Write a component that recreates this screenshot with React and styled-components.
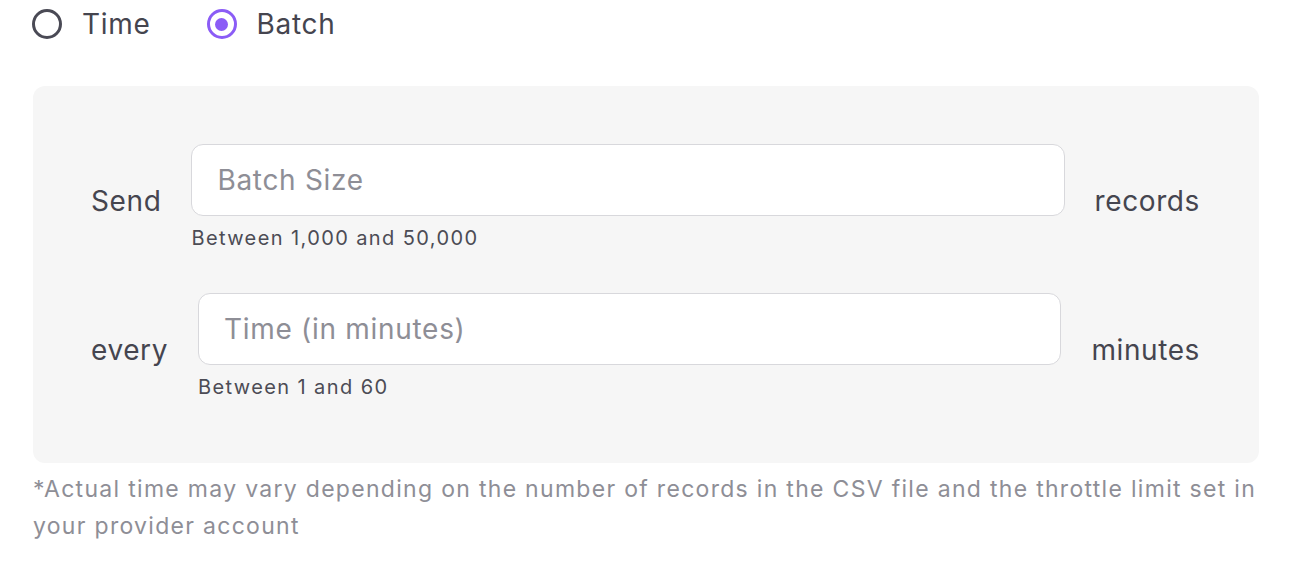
import React from "react";
import styled, { createGlobalStyle } from "styled-components";

const Global = createGlobalStyle`
  html, body { margin: 0; padding: 0; background: #ffffff; }
  body { font-family: Inter, "Noto Sans", sans-serif; -webkit-font-smoothing: antialiased; }
  * { box-sizing: border-box; }
`;

const Page = styled.div`
  width: 1259px;
  padding-left: 33px;
`;

const RadioGroup = styled.div`
  display: flex;
  align-items: center;
  gap: 56px;
  height: 48px;
  margin-left: -1px;
`;

const RadioOption = styled.label`
  display: flex;
  align-items: center;
  gap: 20px;
  font-size: 28px;
  letter-spacing: 0.7px;
  color: #45454f;
  cursor: pointer;
`;

const RadioCircle = styled.span`
  width: 30px;
  height: 30px;
  border-radius: 50%;
  border: 3px solid ${(p) => (p.$checked ? "#8b5cf6" : "#4a4a55")};
  display: flex;
  align-items: center;
  justify-content: center;
  &::after {
    content: "";
    width: 13px;
    height: 13px;
    border-radius: 50%;
    background: #8b5cf6;
    display: ${(p) => (p.$checked ? "block" : "none")};
  }
`;

const Panel = styled.div`
  margin-top: 38px;
  background: #f6f6f6;
  border-radius: 12px;
  padding: 58px 59px 61px 58px;
  display: flex;
  flex-direction: column;
  gap: 40px;
`;

const Row = styled.div`
  display: flex;
  align-items: center;
  gap: 30px;
`;

const Label = styled.span`
  font-size: 28px;
  line-height: 42px;
  letter-spacing: 0.6px;
  margin-top: 4px;
  color: #45454f;
  white-space: nowrap;
`;

const Field = styled.div`
  flex: 1;
  display: flex;
  flex-direction: column;
  gap: 7px;
`;

const Input = styled.input`
  height: 72px;
  border: 1px solid #d8d8dc;
  border-radius: 12px;
  background: #ffffff;
  padding: 0 25px;
  font-family: Inter, "Noto Sans", sans-serif;
  font-size: 28px;
  letter-spacing: 0.7px;
  color: #45454f;
  outline: none;
  &::placeholder { color: #8e8e96; }
`;

const Help = styled.span`
  font-size: 20px;
  line-height: 30px;
  color: #4c4c55;
  letter-spacing: 1.4px;
`;

const Note = styled.p`
  margin: 8px 0 0;
  font-size: 23px;
  line-height: 37px;
  color: #8e8e96;
  letter-spacing: 1.3px;
`;

export default function App() {
  return (
    <>
      <Global />
      <Page>
        <RadioGroup>
          <RadioOption>
            <RadioCircle />
            Time
          </RadioOption>
          <RadioOption>
            <RadioCircle $checked />
            Batch
          </RadioOption>
        </RadioGroup>
        <Panel>
          <Row>
            <Label>Send</Label>
            <Field>
              <Input placeholder="Batch Size" />
              <Help>Between 1,000 and 50,000</Help>
            </Field>
            <Label>records</Label>
          </Row>
          <Row>
            <Label>every</Label>
            <Field>
              <Input placeholder="Time (in minutes)" />
              <Help>Between 1 and 60</Help>
            </Field>
            <Label>minutes</Label>
          </Row>
        </Panel>
        <Note>
          *Actual time may vary depending on the number of records in the CSV file and the throttle limit set in your provider account
        </Note>
      </Page>
    </>
  );
}
